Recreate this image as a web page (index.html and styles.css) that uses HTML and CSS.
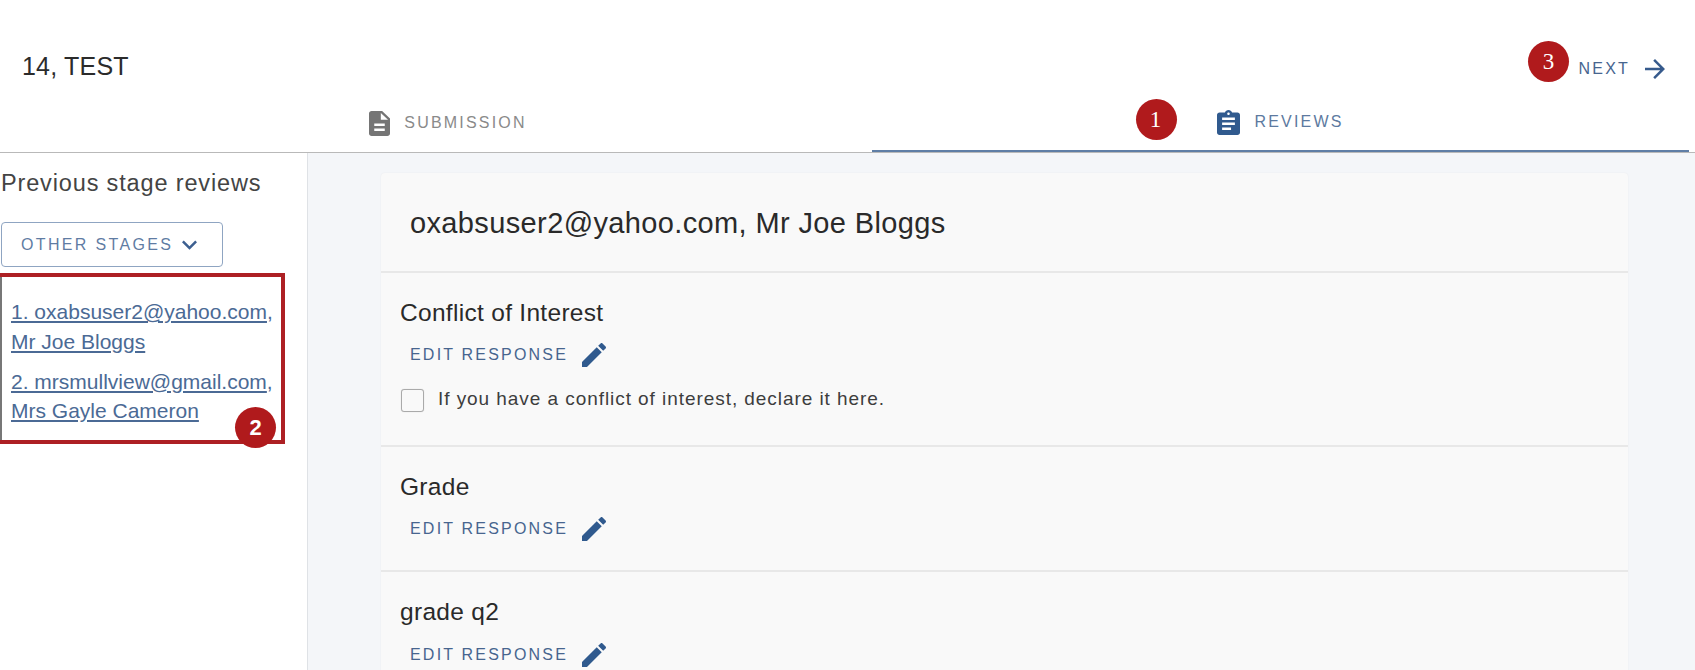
FILE: index.html
```html
<!DOCTYPE html>
<html lang="en">
<head>
<meta charset="utf-8">
<title>Reviews</title>
<link rel="stylesheet" href="styles.css">
</head>
<body>
<div class="page">
  <header class="top">
    <h1 class="title">14, TEST</h1>
    <a class="next">NEXT
      <svg class="next-icon" viewBox="4 4 16 16"><path d="M12 4l-1.41 1.41L16.17 11H4v2h12.17l-5.58 5.59L12 20l8-8z"/></svg>
    </a>
    <span class="badge badge-3">3</span>
  </header>
  <nav class="tabs">
    <div class="tab tab-first">
      <svg class="tab-icon" viewBox="4 2 16 20" preserveAspectRatio="none"><path d="M14 2H6c-1.1 0-2 .9-2 2v16c0 1.1.9 2 2 2h12c1.1 0 2-.9 2-2V8l-6-6zm2 16H8v-2h8v2zm0-4H8v-2h8v2zm-3-5V3.5L18.5 9H13z"/></svg>
      <span>SUBMISSION</span>
    </div>
    <div class="tab tab-active">
      <span class="badge badge-1">1</span>
      <svg class="tab-icon" viewBox="3 1 18 20" preserveAspectRatio="none"><path d="M19 3h-4.18C14.4 1.84 13.3 1 12 1c-1.3 0-2.4.84-2.82 2H5c-1.1 0-2 .9-2 2v14c0 1.1.9 2 2 2h14c1.1 0 2-.9 2-2V5c0-1.1-.9-2-2-2zm-7 0c.55 0 1 .45 1 1s-.45 1-1 1-1-.45-1-1 .45-1 1-1zm2 14H7v-2h7v2zm3-4H7v-2h10v2zm0-4H7V7h10v2z"/></svg>
      <span>REVIEWS</span>
    </div>
  </nav>
  <div class="layout">
    <aside class="side">
      <h2 class="side-title">Previous stage reviews</h2>
      <button class="stages">OTHER STAGES
        <svg class="chev" viewBox="6 8.5 12 7.5"><path d="M7.41 8.59L12 13.17l4.59-4.58L18 10l-6 6-6-6z"/></svg>
      </button>
      <div class="list">
        <p class="item"><a>1. oxabsuser2@yahoo.com</a>,<br><a>Mr Joe Bloggs</a></p>
        <p class="item"><a>2. mrsmullview@gmail.com</a>,<br><a>Mrs Gayle Cameron</a></p>
        <span class="badge badge-2">2</span>
      </div>
    </aside>
    <main class="main">
      <section class="card">
        <div class="card-head">oxabsuser2@yahoo.com, Mr Joe Bloggs</div>
        <div class="q q-conflict">
          <h3 class="q-title">Conflict of Interest</h3>
          <a class="edit">EDIT RESPONSE
            <svg class="pencil" viewBox="3 3 18 18"><path d="M3 17.25V21h3.75L17.81 9.94l-3.75-3.75L3 17.25zM20.71 7.04c.39-.39.39-1.02 0-1.41l-2.34-2.34c-.39-.39-1.02-.39-1.41 0l-1.83 1.83 3.75 3.75 1.83-1.83z"/></svg>
          </a>
          <label class="check"><span class="box"></span>If you have a conflict of interest, declare it here.</label>
        </div>
        <div class="q q-grade">
          <h3 class="q-title">Grade</h3>
          <a class="edit">EDIT RESPONSE
            <svg class="pencil" viewBox="3 3 18 18"><path d="M3 17.25V21h3.75L17.81 9.94l-3.75-3.75L3 17.25zM20.71 7.04c.39-.39.39-1.02 0-1.41l-2.34-2.34c-.39-.39-1.02-.39-1.41 0l-1.83 1.83 3.75 3.75 1.83-1.83z"/></svg>
          </a>
        </div>
        <div class="q q-last">
          <h3 class="q-title">grade q2</h3>
          <a class="edit">EDIT RESPONSE
            <svg class="pencil" viewBox="3 3 18 18"><path d="M3 17.25V21h3.75L17.81 9.94l-3.75-3.75L3 17.25zM20.71 7.04c.39-.39.39-1.02 0-1.41l-2.34-2.34c-.39-.39-1.02-.39-1.41 0l-1.83 1.83 3.75 3.75 1.83-1.83z"/></svg>
          </a>
        </div>
      </section>
    </main>
  </div>
</div>
</body>
</html>
```
FILE: styles.css
```css
* { box-sizing: border-box; }
html, body { margin: 0; height: 670px; overflow: hidden; background: #fff; }
body { font-family: "Liberation Sans", Arial, sans-serif; color: #262626; }

.page { width: 1695px; height: 670px; display: flex; flex-direction: column; }

.top { position: relative; height: 100px; display: flex; justify-content: space-between; align-items: flex-start; padding: 50px 30px 0 22px; }
.title { margin: 0; font-size: 25px; line-height: 32px; font-weight: 400; letter-spacing: .2px; color: #2b2b2b; }
.next { display: flex; align-items: center; gap: 15px; font-size: 16px; letter-spacing: 2.2px; line-height: 24px; color: #47658f; margin-top: 7px; }
.next-icon { width: 20px; height: 20px; fill: #365a8c; }

.badge { position: absolute; z-index: 2; width: 41px; height: 41px; border-radius: 50%; background: #b01a1c; color: #fff; font-family: "Liberation Serif", serif; font-size: 23px; display: flex; align-items: center; justify-content: center; }
.badge-3 { left: 1528px; top: 41px; }
.badge-1 { left: 264px; top: -1px; }
.badge-2 { left: 233px; bottom: -8px; font-family: "Liberation Sans", sans-serif; font-weight: 700; font-size: 22px; }

.tabs { display: flex; height: 53px; border-bottom: 1px solid #b9b9b9; padding-right: 6px; }
.tab { display: flex; align-items: center; justify-content: center; gap: 14px; font-size: 16px; letter-spacing: 2.2px; padding-bottom: 6px; }
.tab-first { width: 872px; padding-left: 24px; color: #8a8a8a; }
.tab-first .tab-icon { width: 21px; fill: #757575; }
.tab-active { position: relative; flex: 1; color: #5d7aa0; height: 52px; border-bottom: 2px solid #5f7ea6; }
.tab-icon { width: 23px; height: 25px; fill: #305a8e; }

.layout { flex: 1; display: flex; min-height: 0; }
.side { width: 308px; border-right: 1px solid #dfe2e6; padding: 15px 0 0 1px; }
.side-title { margin: 0; font-size: 23.5px; line-height: 30px; font-weight: 400; letter-spacing: .85px; color: #444; }
.stages { display: flex; align-items: center; gap: 9px; margin: 24px 0 0 0; width: 222px; height: 45px; padding: 0 0 0 19px; background: #fff; border: 1px solid #8fa5c2; border-radius: 4px; font-family: inherit; font-size: 16px; letter-spacing: 2.35px; color: #5f7ca3; }
.chev { width: 15px; height: 10px; fill: #3c5f90; }

.list { position: relative; margin: 6px 0 0 -1px; width: 285px; height: 171px; border: 4px solid #ad2024; border-left: 2px solid #777; padding: 20px 0 0 9px; font-size: 21px; line-height: 29.5px; color: #4b6a95; }
.item { margin: 0 0 10.5px; white-space: nowrap; }
.item a { text-decoration: underline; text-underline-offset: 2px; }
.list::before { content: ""; position: absolute; left: -2px; right: 0; top: -4px; height: 4px; background: #ad2024; }
.list::after { content: ""; position: absolute; left: -2px; right: 0; bottom: -4px; height: 4px; background: #ad2024; }

.main { flex: 1; background: #f4f6f9; padding: 20px 67px 0 73px; overflow: hidden; }
.card { background: #f9f9f9; border-radius: 4px 4px 0 0; box-shadow: 0 0 2px rgba(0,0,0,.06); }
.card-head { height: 100px; padding: 32px 0 0 29px; font-size: 29px; line-height: 36px; letter-spacing: .37px; color: #2a2a2a; border-bottom: 2px solid #e8e8e8; }
.q { padding: 25px 0 0 19px; border-bottom: 2px solid #e8e8e8; }
.q-conflict { height: 174px; }
.q-grade { height: 125px; }
.q-last { border-bottom: 0; height: 100px; }
.q-title { margin: 0; font-size: 24.5px; line-height: 30px; font-weight: 400; letter-spacing: .3px; color: #2a2a2a; }
.edit { display: flex; align-items: center; gap: 14px; margin: 12px 0 0 10px; height: 30px; font-size: 16px; letter-spacing: 2.2px; color: #47658f; }
.q-last .edit { margin-top: 13px; }
.pencil { width: 24px; height: 24px; fill: #305a8e; }
.check { display: flex; align-items: center; gap: 14px; margin-top: 16px; font-size: 19px; letter-spacing: .94px; line-height: 26px; color: #3d3d3d; }
.box { width: 23px; height: 23px; margin-left: 1px; border: 1px solid #aaa; border-radius: 3px; background: #f9f9f9; margin-top: 2px; box-shadow: 0 0 1px rgba(0,0,0,.2); }
```
